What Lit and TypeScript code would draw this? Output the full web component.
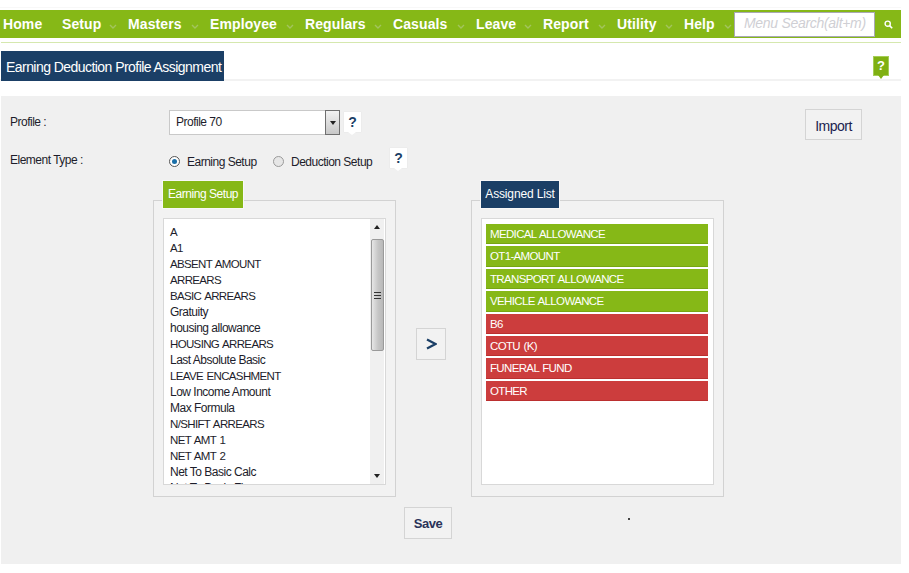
import { LitElement, html, css, svg } from "lit";
import { customElement } from "lit/decorators.js";

const NAV: [string, number][] = [
  ["Home", 59], ["Setup", 66], ["Masters", 82], ["Employee", 95], ["Regulars", 88],
  ["Casuals", 83], ["Leave", 67], ["Report", 74], ["Utility", 67], ["Help", 47],
];
const EARN = ["A","A1","ABSENT AMOUNT","ARREARS","BASIC ARREARS","Gratuity","housing allowance","HOUSING ARREARS","Last Absolute Basic","LEAVE ENCASHMENT","Low Income Amount","Max Formula","N/SHIFT ARREARS","NET AMT 1","NET AMT 2","Net To Basic Calc","Net To Basic Fix"];
const GREEN = ["MEDICAL ALLOWANCE","OT1-AMOUNT","TRANSPORT ALLOWANCE","VEHICLE ALLOWANCE"];
const RED = ["B6","COTU (K)","FUNERAL FUND","OTHER"];

const chevron = svg`<svg class="chev" width="8" height="5" viewBox="0 0 8 5"><path d="M1 1l3 3 3-3" fill="none" stroke="#a3c45e" stroke-width="1.4"/></svg>`;

@customElement("app-root")
export class AppRoot extends LitElement {
  static styles = css`
    :host { display: block; width: 909px; height: 573px; background: #fff; overflow: hidden;
      font-family: "Liberation Sans", Arial, sans-serif; color: #1d1d2b; }
    .page { width: 901px; display: flex; flex-direction: column; }
    .topline { height: 1px; margin-top: 7px; background: #f8f8f8; }
    .nav { margin-top: 2px; height: 28px; background: #86b817; display: flex; align-items: center; padding-left: 3px; }
    .nav-item { color: #fff; font-weight: 700; font-size: 14px; position: relative; white-space: nowrap; line-height: 28px; letter-spacing: 0.1px; flex: none; }
    .chev { position: absolute; right: 11px; top: 14px; }
    .nav-item.last .chev { right: -1px; }
    .search { width: 141px; height: 25px; box-sizing: border-box; background: #fff; border: 1.5px solid #a9a9b4;
      color: #cfcfd4; font-style: italic; font-size: 14px; padding-left: 9px; line-height: 21px; white-space: nowrap; overflow: hidden; letter-spacing: -0.3px; }
    .nav-search { display: flex; margin-left: auto; align-items: center; }
    .sicon { width: 26px; display: flex; justify-content: center; }
    .greenline { margin-top: 4px; height: 1px; margin-left: 1px; background: #d5e8ae; }
    .titlebar { margin-top: 8px; height: 28px; display: flex; align-items: flex-start; border-bottom: 2px solid #f2f2f2; padding-left: 1px; justify-content: space-between; }
    .title { height: 30px; width: 223px; box-sizing: border-box; background: #1b3f66; color: #fff; font-size: 14px; line-height: 32px; padding-left: 5px; white-space: nowrap; letter-spacing: -0.55px; }
    .hint-g { margin: 5px 12px 0 0; width: 16px; height: 20px; background: #7fb012; border: 1px solid #a5cd55; box-sizing: border-box; color: #fff; font-weight: 700; font-size: 13px; line-height: 18px; text-align: center; position: relative; }
    .hint-g::after { content: ""; position: absolute; left: 4px; top: 18px; border: 3px solid transparent; border-top: 4px solid #7fb012; }
    .panel { margin: 15px 0 0 1px; height: 468px; background: #f0f0f0; font-size: 12px; display: flex; flex-direction: column; padding: 12px 0 0 0; box-sizing: border-box; letter-spacing: -0.5px; }
    .row { display: flex; align-items: center; }
    .r1 { height: 28px; padding-left: 9px; }
    .label { width: 159px; }
    .select { width: 171px; height: 25px; box-sizing: border-box; background: #fff; border: 1px solid #c9c9c9; display: flex; align-items: center; justify-content: space-between; padding-left: 6px; }
    .arrow { width: 15px; height: 25px; margin-right: -1px; box-sizing: border-box; border: 1px solid #6f6f6f; background: linear-gradient(#f2f2f2, #c8c8c8); display: flex; align-items: center; justify-content: center; }
    .arrow i { border: 3px solid transparent; border-top: 4px solid #222; margin-top: 4px; }
    .q { width: 17px; height: 20px; background: #fff; color: #1b3f66; font-weight: 700; font-size: 14px; line-height: 20px; text-align: center; position: relative; box-shadow: 0 0 1px #ddd; letter-spacing: 0; }
    .q::after { content: ""; position: absolute; left: 4px; top: 20px; border: 4px solid transparent; border-top: 3px solid #fff; }
    .r1 .q { margin-left: 4px; margin-top: -1px; }
    .btn { box-sizing: border-box; background: #f2f2f2; border: 1.5px solid #d4d4d4; color: #1b2450; font-size: 14px; display: flex; align-items: center; justify-content: center; }
    .import { margin-left: auto; margin-right: 39px; margin-top: 4px; width: 57px; height: 31px; padding-top: 3px; }
    .r2 { margin-top: 13px; height: 22px; padding-left: 9px; }
    .radio { width: 11px; height: 11px; border-radius: 50%; border: 1px solid #9a9a9a; box-sizing: border-box; background: #e6e6e6; display: flex; align-items: center; justify-content: center; margin-top: 2px; }
    .radio.on { background: #fff; border-color: #555; }
    .radio.on i { width: 5px; height: 5px; border-radius: 50%; background: #1a6fa8; }
    .rl { margin: 4px 0 0 7px; }
    .rl.e { width: 86px; }
    .rl.d { width: 99px; }
    .r2 .q { margin-top: -4px; }
    .lists { margin: 29px 0 0 152px; display: flex; align-items: stretch; }
    .fs { position: relative; height: 297px; box-sizing: border-box; background: #f2f2f2; border: 1.5px solid #d2d2d2; padding: 17px 9px 0 9px; }
    .fs.l { width: 243px; }
    .fs.r { width: 253px; }
    .tab { position: absolute; top: -20px; left: 9px; height: 27px; line-height: 27px; color: #fff; font-size: 12px; text-align: center; box-sizing: border-box; outline: 1px solid #f8f8f8; }
    .tab.g { background: #86b817; width: 80px; letter-spacing: -0.45px; }
    .tab.n { background: #1b3f66; width: 78px; letter-spacing: -0.15px; }
    .box { background: #fff; border: 1.5px solid #d8d8d8; height: 267px; box-sizing: border-box; overflow: hidden; }
    .earn { display: flex; }
    .items { flex: 1; padding: 5px 0 0 6px; line-height: 16px; white-space: nowrap; overflow: hidden; }
    .caps { font-size: 11.5px; letter-spacing: -0.65px; word-spacing: 1px; }
    .sb { width: 14px; background: #f0f0f0; display: flex; flex-direction: column; align-items: center; position: relative; margin-right: 1px; }
    .up, .down { height: 16px; display: flex; align-items: center; justify-content: center; }
    .up i { border: 3px solid transparent; border-bottom: 4px solid #222; margin-top: -3px; }
    .down { position: absolute; bottom: 0; }
    .down i { border: 3px solid transparent; border-top: 4px solid #222; margin-top: 3px; }
    .thumb { width: 13px; height: 112px; box-sizing: border-box; border: 1px solid #9a9a9a; border-radius: 2px; background: linear-gradient(90deg, #e6e6e6, #c6c6c6 55%, #b8b8b8); display: flex; align-items: center; justify-content: center; margin-top: 4px; }
    .grip { width: 7px; height: 7px; background: repeating-linear-gradient(#333 0 1px, transparent 1px 3px); }
    .assigned { padding: 5px 5px 0 4px; display: flex; flex-direction: column; gap: 2px; }
    .it { height: 20.4px; line-height: 21px; color: #fff; padding-left: 4px; box-sizing: border-box; }
    .it.g { background: #86b817; border-bottom: 1px solid #76a512; }
    .it.r { background: #cc3d3d; border-bottom: 1px solid #bb2f2f; }
    .mid { width: 75px; padding-left: 20px; box-sizing: border-box; display: flex; align-items: center; padding-bottom: 9px; }
    .go { width: 30px; height: 32px; }
    .bottom { margin-top: 10px; padding-left: 403px; display: flex; }
    .save { width: 48px; height: 32px; font-weight: 700; font-size: 13px; color: #2a3358; }
    .dot { width: 2px; height: 2px; background: #444; margin: 11px 0 0 176px; }
  `;

  render() {
    const cap = (s: string) => (s === s.toUpperCase() ? "caps" : "");
    return html`<div class="page">
      <div class="topline"></div>
      <div class="nav">
        ${NAV.map(([n, w], i) => html`<div class="nav-item ${i === NAV.length - 1 ? "last" : ""}" style="width:${w}px">${n}${i ? chevron : ""}</div>`)}
        <div class="nav-search">
          <div class="search">Menu Search(alt+m)</div>
          <div class="sicon"><svg width="9" height="9" viewBox="0 0 9 9"><circle cx="3.7" cy="3.7" r="2.6" fill="none" stroke="#fff" stroke-width="1.4"/><path d="M5.6 5.6L8.2 8.2" stroke="#fff" stroke-width="1.6"/></svg></div>
        </div>
      </div>
      <div class="greenline"></div>
      <div class="titlebar">
        <div class="title">Earning Deduction Profile Assignment</div>
        <div class="hint-g">?</div>
      </div>
      <div class="panel">
        <div class="row r1">
          <div class="label">Profile :</div>
          <div class="select"><span>Profile 70</span><div class="arrow"><i></i></div></div>
          <div class="q">?</div>
          <div class="btn import">Import</div>
        </div>
        <div class="row r2">
          <div class="label">Element Type :</div>
          <div class="radio on"><i></i></div><div class="rl e">Earning Setup</div>
          <div class="radio"></div><div class="rl d">Deduction Setup</div>
          <div class="q">?</div>
        </div>
        <div class="lists">
          <div class="fs l">
            <div class="tab g">Earning Setup</div>
            <div class="box earn">
              <div class="items">${EARN.map((e) => html`<div class=${cap(e)}>${e}</div>`)}</div>
              <div class="sb">
                <div class="up"><i></i></div>
                <div class="thumb"><div class="grip"></div></div>
                <div class="down"><i></i></div>
              </div>
            </div>
          </div>
          <div class="mid"><div class="btn go"><svg width="11" height="12" viewBox="0 0 11 12"><path d="M1 1.5L9.5 6 1 10.5" fill="none" stroke="#1b3f66" stroke-width="2.2"/></svg></div></div>
          <div class="fs r">
            <div class="tab n">Assigned List</div>
            <div class="box assigned">
              ${GREEN.map((a) => html`<div class="it g caps">${a}</div>`)}
              ${RED.map((a) => html`<div class="it r caps">${a}</div>`)}
            </div>
          </div>
        </div>
        <div class="bottom">
          <div class="btn save">Save</div>
          <div class="dot"></div>
        </div>
      </div>
    </div>`;
  }
}
